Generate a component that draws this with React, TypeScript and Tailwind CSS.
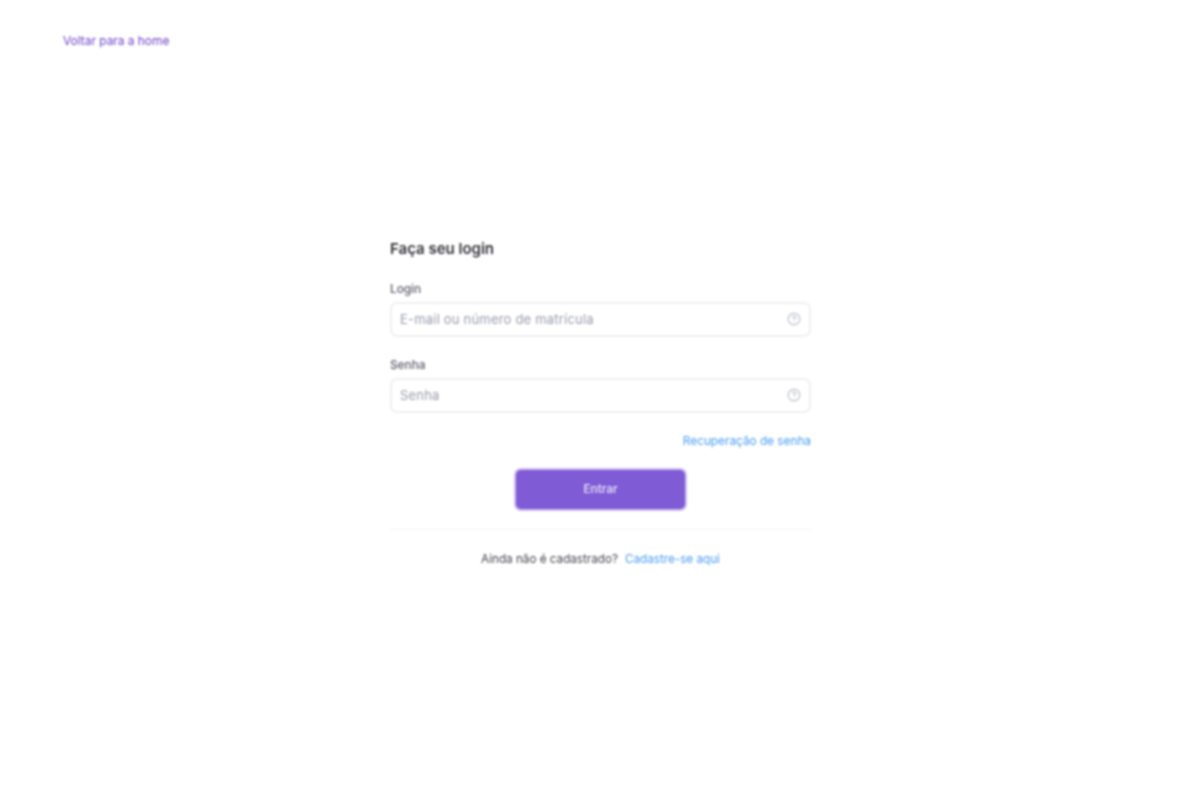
import { CircleHelp } from 'lucide-react';

function Field({ label, placeholder }: { label: string; placeholder: string }) {
  return (
    <div className="flex flex-col gap-[5px]">
      <label className="text-[11.8px] leading-[16px] font-medium text-[#5a5a68]">{label}</label>
      <div className="h-[35px] flex items-center justify-between pl-[8px] pr-[8px] rounded-[7px] border-2 border-[#eff0f4] bg-white">
        <span className="text-[13px] tracking-[0.2px] text-[#9a9cab]">{placeholder}</span>
        <CircleHelp className="w-[14px] h-[14px] -translate-y-px text-[#b4b6c0]" strokeWidth={1.75} />
      </div>
    </div>
  );
}

function App() {
  return (
    <div className="w-full min-h-[800px] bg-white font-['Inter',sans-serif] blur-[1px]">
      <div className="pt-[33px] pl-[63px] h-[241px]">
        <a className="block text-[11.9px] leading-[16px] text-[#6d3fc9]">Voltar para a home</a>
      </div>
      <div className="w-[421px] mx-auto flex flex-col">
        <h1 className="-mt-px text-[15px] leading-[18px] font-semibold text-[#333338]">Faça seu login</h1>
        <div className="mt-[23px] flex flex-col gap-[20px]">
          <Field label="Login" placeholder="E-mail ou número de matrícula" />
          <Field label="Senha" placeholder="Senha" />
        </div>
        <a className="mt-[20px] self-end text-[11.8px] leading-[16px] text-[#4a9df5]">Recuperação de senha</a>
        <button className="mt-[19px] self-center w-[173px] h-[43px] rounded-[7px] border-2 border-[#cdbdf0] bg-[#7f5bd5] text-[11.8px] font-medium text-[#efeafb]">
          Entrar
        </button>
        <div className="mt-[18px] h-px bg-[#f5f5f7]" />
        <p className="mt-[21px] text-center text-[11.7px] leading-[16px] text-[#45454d]">
          Ainda não é cadastrado?
          <a className="ml-[7px] text-[#4a9df5]">Cadastre-se aqui</a>
        </p>
      </div>
    </div>
  );
}

export default App;
